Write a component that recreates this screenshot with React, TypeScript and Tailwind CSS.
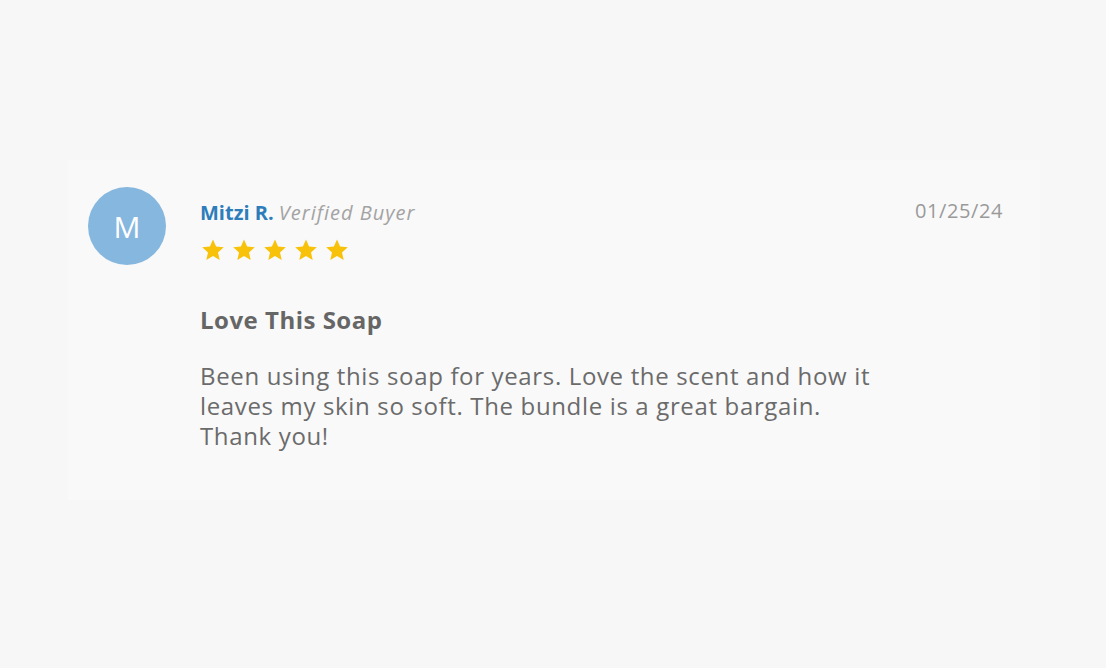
import React from "react";

const Star = () => (
  <svg width="24" height="24" viewBox="0 0 24 24" className="block">
    <path
      d="M12 1.5l3.1 7.1 7.7.7-5.8 5.1 1.7 7.6L12 18.1 5.3 22l1.7-7.6-5.8-5.1 7.7-.7z"
      fill="#f8c20a"
    />
  </svg>
);

export default function App() {
  const font = { fontFamily: '"Open Sans", "Noto Sans", sans-serif' };
  return (
    <div className="min-h-screen bg-[#f7f7f7] pt-[160px] pl-[68px]" style={font}>
      <div className="w-[972px] h-[340px] bg-[#f9f9f9] flex pl-[20px] pt-[27px] pr-[37px]">
        <div className="w-[78px] h-[78px] rounded-full bg-[#85b7df] flex items-center justify-center text-white text-[30px] shrink-0">
          M
        </div>
        <div className="ml-[34px] flex-1">
          <div className="flex justify-between items-start">
            <div>
              <div className="text-[20px] leading-[26px] mt-[13px] whitespace-nowrap">
                <span className="font-bold text-[#2e7dbb]">Mitzi R.</span>{" "}
                <span className="italic text-[#a3a3a3] tracking-[1px]">Verified Buyer</span>
              </div>
              <div className="flex gap-[7px] mt-[12px] ml-[1px]">
                <Star />
                <Star />
                <Star />
                <Star />
                <Star />
              </div>
            </div>
            <div className="text-[20px] leading-[26px] mt-[11px] text-[#9a9a9a] tracking-[0.6px]">01/25/24</div>
          </div>
          <div className="mt-[43px] text-[24px] leading-[30px] font-bold text-[#666666] tracking-[0.5px]">Love This Soap</div>
          <div className="mt-[26px] text-[24px] leading-[30px] text-[#6b6b6b] w-[688px] tracking-[0.65px]">
            Been using this soap for years. Love the scent and how it leaves my skin so soft. The bundle is a great bargain. Thank you!
          </div>
        </div>
      </div>
    </div>
  );
}
